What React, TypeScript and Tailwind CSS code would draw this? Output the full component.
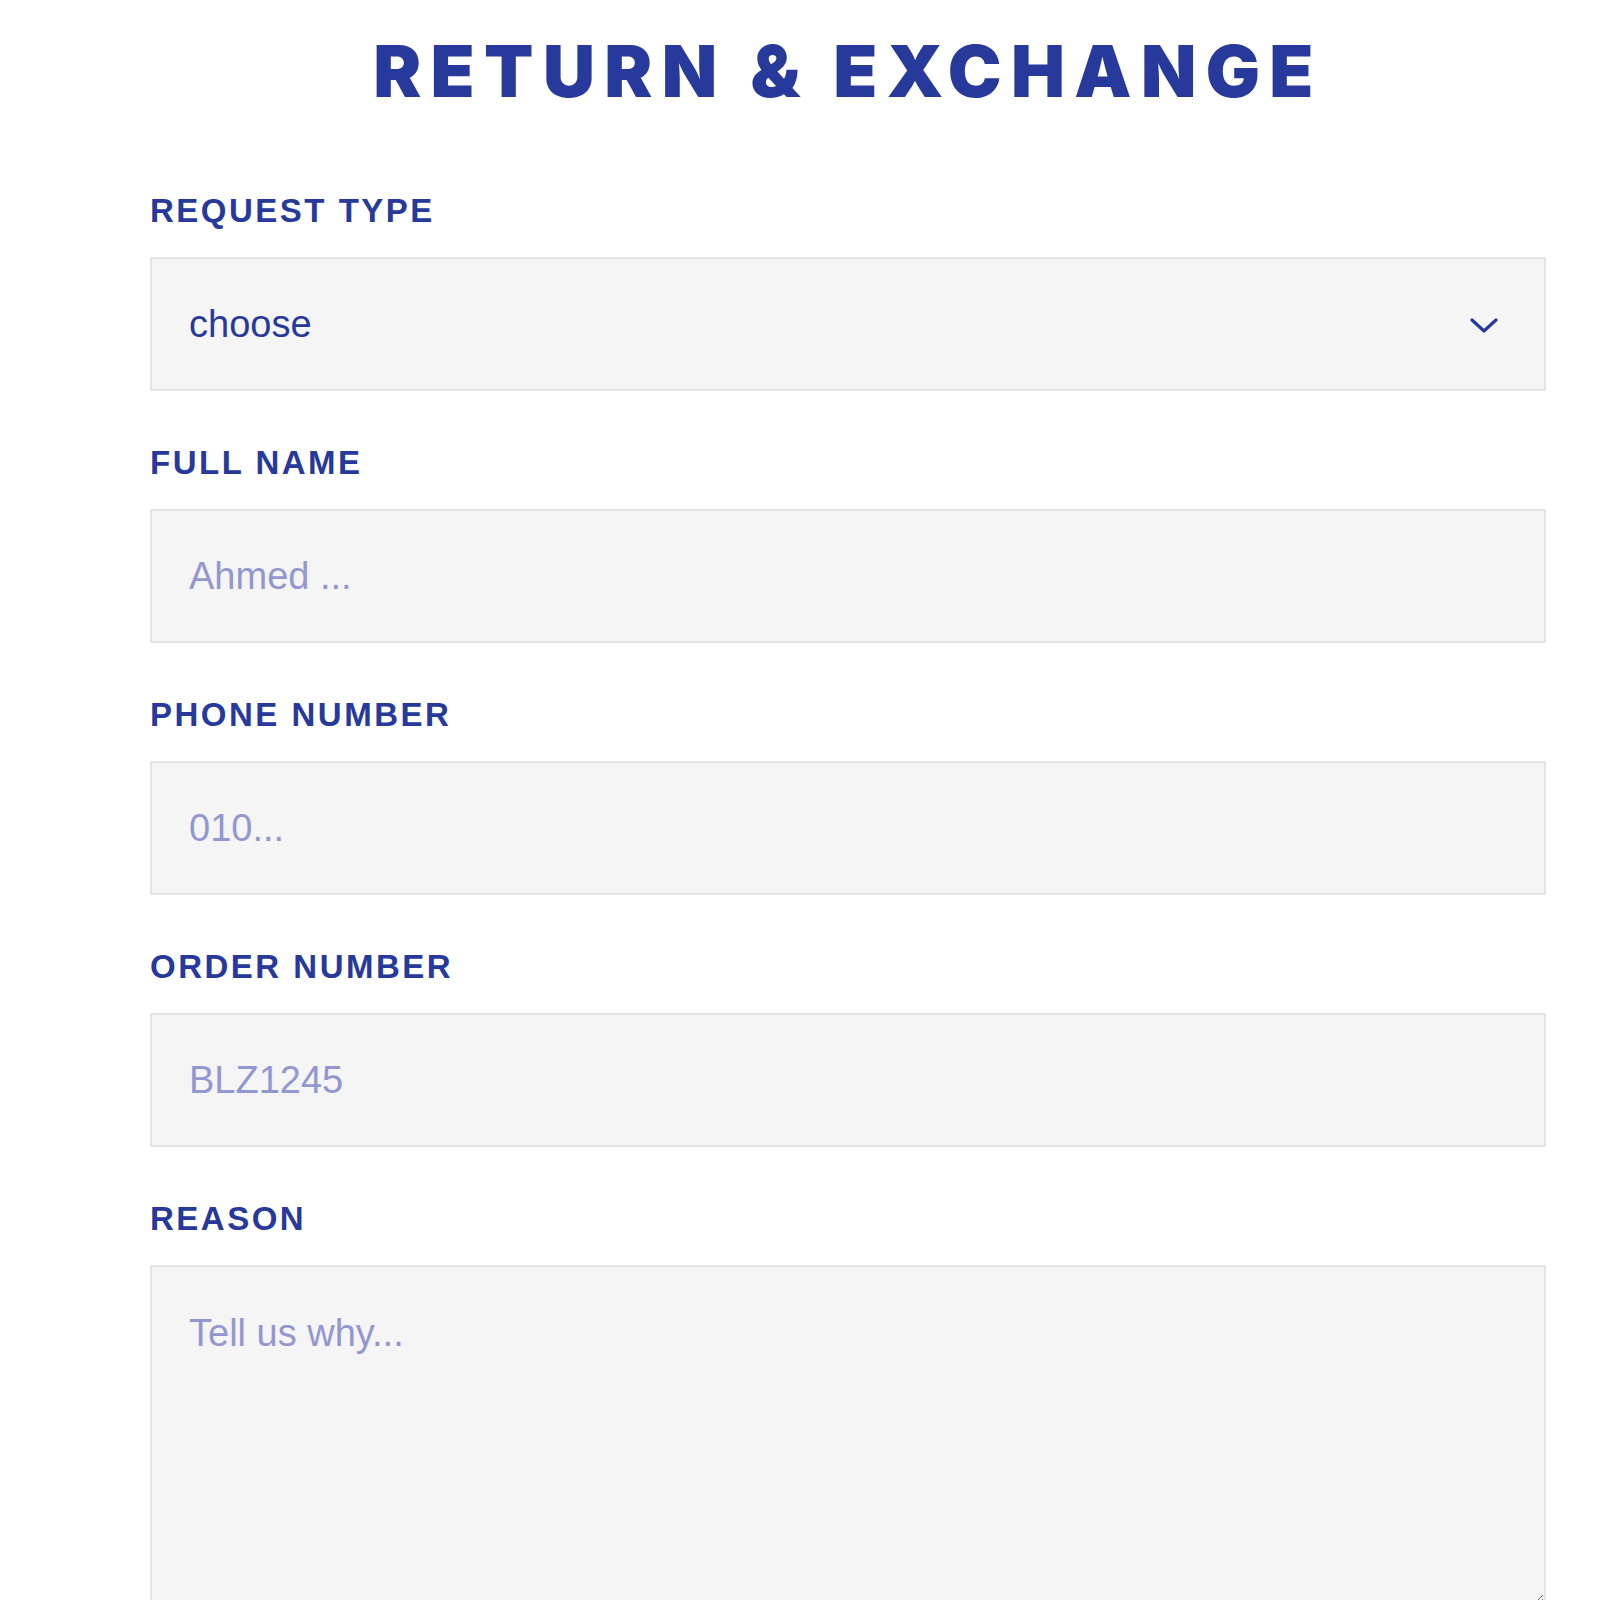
import { ChangeEvent, useState } from "react";

type Field = {
  id: string;
  label: string;
  placeholder: string;
};

const CAMPOS: Field[] = [
  { id: "fullName", label: "FULL NAME", placeholder: "Ahmed ..." },
  { id: "phone", label: "PHONE NUMBER", placeholder: "010..." },
  { id: "order", label: "ORDER NUMBER", placeholder: "BLZ1245" },
];

const labelCls =
  "block text-[33px] leading-[40px] font-bold tracking-[2.5px] text-[#27399a] mb-[26px] font-['Liberation_Sans',Arial,sans-serif]";

const boxCls =
  "w-full bg-[#f5f5f5] border-[2.5px] border-[#e4e4e4] text-[38px] text-[#27399a] placeholder:text-[#9397d0] outline-none font-['Liberation_Sans',Arial,sans-serif]";

export default function App() {
  const [form, setForm] = useState<Record<string, string>>({
    tipo: "",
    fullName: "",
    phone: "",
    order: "",
    reason: "",
  });

  const update =
    (key: string) =>
    (e: ChangeEvent<HTMLInputElement | HTMLSelectElement | HTMLTextAreaElement>) =>
      setForm((prev) => ({ ...prev, [key]: e.target.value }));

  return (
    <div className="min-h-screen bg-white pl-[150px] pr-[54px] pt-[35px] overflow-hidden">
      <h1 className="text-center text-[72px] leading-[72px] font-black tracking-[0.13em] text-[#27399a] font-['Inter',sans-serif]">
        RETURN &amp; EXCHANGE
      </h1>

      <div className="mt-[84px]">
        <label className={labelCls}>REQUEST TYPE</label>
        <div className="relative">
          <select
            value={form.tipo}
            onChange={update("tipo")}
            className={`${boxCls} h-[134px] pl-[37px] appearance-none`}
          >
            <option value="">choose</option>
            <option value="return">Return</option>
            <option value="exchange">Exchange</option>
          </select>
          <svg
            className="absolute right-[48px] top-[61px] pointer-events-none"
            width="28"
            height="16"
            viewBox="0 0 28 16"
            fill="none"
          >
            <polyline
              points="2,2 14,13 26,2"
              stroke="#27399a"
              strokeWidth="3.2"
              strokeLinecap="round"
              strokeLinejoin="round"
            />
          </svg>
        </div>
      </div>

      {CAMPOS.map((c) => (
        <div key={c.id} className="mt-[52px]">
          <label className={labelCls}>{c.label}</label>
          <input
            type="text"
            value={form[c.id]}
            onChange={update(c.id)}
            placeholder={c.placeholder}
            className={`${boxCls} h-[134px] px-[37px]`}
          />
        </div>
      ))}

      <div className="mt-[52px]">
        <label className={labelCls}>REASON</label>
        <textarea
          value={form.reason}
          onChange={update("reason")}
          placeholder="Tell us why..."
          className={`${boxCls} h-[340px] px-[37px] pt-[44px] leading-[1.2] block`}
        />
      </div>
    </div>
  );
}
